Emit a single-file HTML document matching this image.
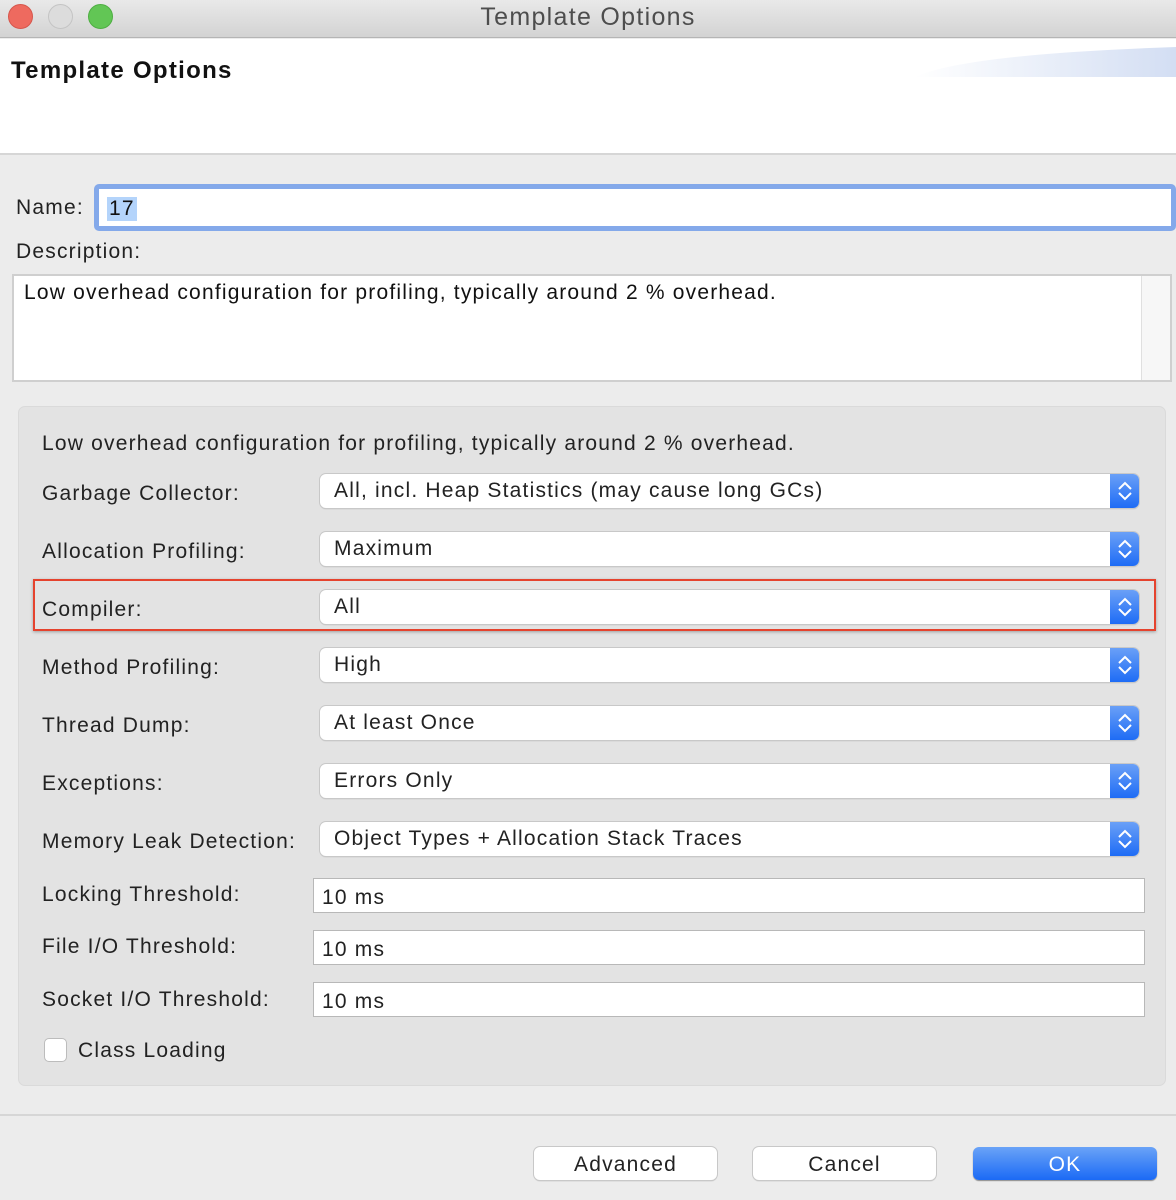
<!DOCTYPE html>
<html><head><meta charset="utf-8"><style>
*{margin:0;padding:0;box-sizing:border-box}
body{width:1176px;height:1200px;position:relative;overflow:hidden;background:#ececec;font-family:"Liberation Sans",sans-serif;color:#222;font-size:21px;letter-spacing:1.2px}
.a{position:absolute;white-space:nowrap}
.tb{left:0;top:0;width:1176px;height:38px;background:linear-gradient(#e9e9e9,#d3d3d3);border-bottom:1px solid #b5b5b5}
.dot{position:absolute;top:4px;width:25px;height:25px;border-radius:50%}
.combo{position:absolute;left:320px;width:819px;height:34px;background:#fff;border-radius:6px;box-shadow:0 0 0 1px #c8c8c8,0 1px 1px #aaa;}
.combo span{position:absolute;left:14px;top:5px}
.combo i{position:absolute;right:0;top:0;width:29px;height:34px;border-radius:0 6px 6px 0;background:linear-gradient(#6aa0f7,#1e6cf5)}
.combo svg{position:absolute;right:6px;top:6px}
.tf{position:absolute;left:313px;width:832px;height:35px;background:#fff;border:1px solid #b8b8b8}
.tf span{position:absolute;left:8px;top:7px}
.lbl{position:absolute;left:42px}
.btn{position:absolute;top:1147px;height:33px;width:183px;background:#fff;border-radius:6px;box-shadow:0 0 0 1px #c8c8c8,0 1px 1px #999;text-align:center;line-height:35px}
</style></head><body>
<div class="a tb"></div>
<div class="dot" style="left:8px;background:#ee6a5f;border:1px solid #d6564c"></div>
<div class="dot" style="left:48px;background:#dcdcdc;border:1px solid #c4c4c4"></div>
<div class="dot" style="left:88px;background:#62c655;border:1px solid #4eae42"></div>
<div class="a" style="left:0;width:1176px;top:3px;text-align:center;font-size:25px;letter-spacing:1.3px;color:#4d4d4d">Template Options</div>
<div class="a" style="left:0;top:39px;width:1176px;height:116px;background:#fff;border-bottom:2px solid #d6d6d6"></div>
<svg class="a" style="left:905px;top:39px" width="271" height="40"><defs><linearGradient id="g" x1="0" x2="1"><stop offset="0" stop-color="#fff"/><stop offset="1" stop-color="#d3def3"/></linearGradient></defs><path d="M10 38 Q60 15 271 8 L271 38 Z" fill="url(#g)"/></svg>
<div class="a" style="left:11px;top:57px;font-weight:bold;font-size:24px;letter-spacing:1.3px;color:#111">Template Options</div>
<div class="lbl" style="left:16px;top:196px">Name:</div>
<div class="a" style="left:94px;top:184px;width:1082px;height:47px;border:5px solid #84a9ea;border-radius:5px;background:#fff"><span style="position:absolute;left:8px;top:8px;background:#b4d4fb;color:#111;padding:0 2px">17</span></div>
<div class="lbl" style="left:16px;top:240px">Description:</div>
<div class="a" style="left:12px;top:274px;width:1160px;height:108px;background:#fff;border:2px solid #cfcfcf"><span style="position:absolute;left:10px;top:5px;color:#111">Low overhead configuration for profiling, typically around 2 % overhead.</span><div style="position:absolute;right:0;top:0;width:29px;height:104px;background:#f7f7f7;border-left:1px solid #e0e0e0"></div></div>
<div class="a" style="left:18px;top:406px;width:1148px;height:680px;background:#e3e3e3;border-radius:7px;border:1px solid #dadada"></div>
<div class="lbl" style="top:432px">Low overhead configuration for profiling, typically around 2 % overhead.</div>

<div class="lbl" style="top:482px">Garbage Collector:</div>
<div class="combo" style="top:474px"><span>All, incl. Heap Statistics (may cause long GCs)</span><i></i><svg width="16" height="22"><path d="M2 9 L8 3 L14 9 M2 13 L8 19 L14 13" stroke="#fff" stroke-width="2" fill="none"/></svg></div>
<div class="lbl" style="top:540px">Allocation Profiling:</div>
<div class="combo" style="top:532px"><span>Maximum</span><i></i><svg width="16" height="22"><path d="M2 9 L8 3 L14 9 M2 13 L8 19 L14 13" stroke="#fff" stroke-width="2" fill="none"/></svg></div>
<div class="a" style="left:33px;top:579px;width:1123px;height:52px;border:2px solid #e5432e;box-shadow:0 1px 3px rgba(0,0,0,.3)"></div>
<div class="lbl" style="top:598px">Compiler:</div>
<div class="combo" style="top:590px"><span>All</span><i></i><svg width="16" height="22"><path d="M2 9 L8 3 L14 9 M2 13 L8 19 L14 13" stroke="#fff" stroke-width="2" fill="none"/></svg></div>
<div class="lbl" style="top:656px">Method Profiling:</div>
<div class="combo" style="top:648px"><span>High</span><i></i><svg width="16" height="22"><path d="M2 9 L8 3 L14 9 M2 13 L8 19 L14 13" stroke="#fff" stroke-width="2" fill="none"/></svg></div>
<div class="lbl" style="top:714px">Thread Dump:</div>
<div class="combo" style="top:706px"><span>At least Once</span><i></i><svg width="16" height="22"><path d="M2 9 L8 3 L14 9 M2 13 L8 19 L14 13" stroke="#fff" stroke-width="2" fill="none"/></svg></div>
<div class="lbl" style="top:772px">Exceptions:</div>
<div class="combo" style="top:764px"><span>Errors Only</span><i></i><svg width="16" height="22"><path d="M2 9 L8 3 L14 9 M2 13 L8 19 L14 13" stroke="#fff" stroke-width="2" fill="none"/></svg></div>
<div class="lbl" style="top:830px">Memory Leak Detection:</div>
<div class="combo" style="top:822px"><span>Object Types + Allocation Stack Traces</span><i></i><svg width="16" height="22"><path d="M2 9 L8 3 L14 9 M2 13 L8 19 L14 13" stroke="#fff" stroke-width="2" fill="none"/></svg></div>

<div class="lbl" style="top:883px">Locking Threshold:</div>
<div class="tf" style="top:878px"><span>10 ms</span></div>
<div class="lbl" style="top:935px">File I/O Threshold:</div>
<div class="tf" style="top:930px"><span>10 ms</span></div>
<div class="lbl" style="top:988px">Socket I/O Threshold:</div>
<div class="tf" style="top:982px"><span>10 ms</span></div>
<div class="a" style="left:44px;top:1038px;width:23px;height:24px;background:#fff;border:1px solid #bcbcbc;border-radius:5px"></div>
<div class="a" style="left:78px;top:1039px">Class Loading</div>
<div class="a" style="left:0;top:1114px;width:1176px;height:2px;background:#d6d6d6"></div>
<div class="btn" style="left:534px">Advanced</div>
<div class="btn" style="left:753px">Cancel</div>
<div class="btn" style="left:973px;width:184px;background:linear-gradient(#6aa3f7,#1b6af5);color:#fff;box-shadow:0 1px 1px #888">OK</div>
</body></html>
